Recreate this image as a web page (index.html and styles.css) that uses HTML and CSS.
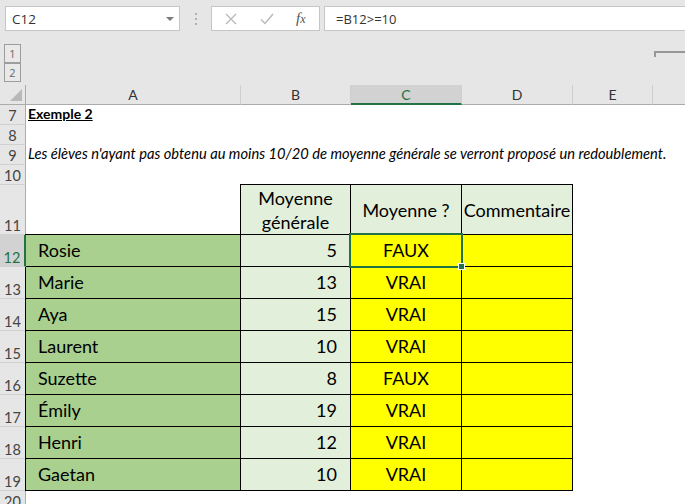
FILE: index.html
```html
<!DOCTYPE html>
<html lang="fr">
<head>
<meta charset="utf-8">
<title>Exemple 2</title>
<link rel="stylesheet" href="styles.css">
</head>
<body>
<div class="app">
  <div class="fbar">
    <div class="namebox"><span>C12</span><span class="caret"></span></div>
    <div class="grip"><i></i><i></i><i></i></div>
    <div class="fbtns">
      <svg class="ico" width="12" height="12" viewBox="0 0 12 12"><path d="M1 1L11 11M11 1L1 11" stroke="#b9b9b9" stroke-width="1.3" fill="none"/></svg>
      <svg class="ico" width="14" height="12" viewBox="0 0 14 12"><path d="M1 6.5L5 10.5L13 1" stroke="#b9b9b9" stroke-width="1.5" fill="none"/></svg>
      <span class="fx">f<span class="fxx">x</span></span>
    </div>
    <div class="finput">=B12&gt;=10</div>
  </div>
  <div class="outline">
    <div class="levels"><div class="lvl">1</div><div class="lvl">2</div></div>
    <div class="bracket"></div>
  </div>
  <div class="sheet">
    <div class="ch corner"><span class="tri"></span></div>
    <div class="ch">A</div>
    <div class="ch">B</div>
    <div class="ch ch-sel">C</div>
    <div class="ch">D</div>
    <div class="ch">E</div>
    <div class="ch ch-last"></div>

    <div class="rh">7</div>
    <div class="cell full"><span class="title">Exemple 2</span></div>
    <div class="rh">8</div>
    <div class="cell full"></div>
    <div class="rh">9</div>
    <div class="cell full"><span class="note">Les élèves n'ayant pas obtenu au moins 10/20 de moyenne générale se verront proposé un redoublement.</span></div>
    <div class="rh">10</div>
    <div class="cell full"></div>

    <div class="rh">11</div>
    <div class="cell"></div>
    <div class="t head">Moyenne<br>générale</div>
    <div class="t head">Moyenne ?</div>
    <div class="t head">Commentaire</div>
    <div class="cell rest"></div>

    <div class="rh rh-sel rh-t">12</div>
    <div class="t name">Rosie</div>
    <div class="t num">5</div>
    <div class="t res res-sel">FAUX<span class="sel"></span><span class="handle"></span></div>
    <div class="t com"></div>
    <div class="cell rest"></div>

    <div class="rh rh-t">13</div>
    <div class="t name">Marie</div>
    <div class="t num">13</div>
    <div class="t res">VRAI</div>
    <div class="t com"></div>
    <div class="cell rest"></div>

    <div class="rh rh-t">14</div>
    <div class="t name">Aya</div>
    <div class="t num">15</div>
    <div class="t res">VRAI</div>
    <div class="t com"></div>
    <div class="cell rest"></div>

    <div class="rh rh-t">15</div>
    <div class="t name">Laurent</div>
    <div class="t num">10</div>
    <div class="t res">VRAI</div>
    <div class="t com"></div>
    <div class="cell rest"></div>

    <div class="rh rh-t">16</div>
    <div class="t name">Suzette</div>
    <div class="t num">8</div>
    <div class="t res">FAUX</div>
    <div class="t com"></div>
    <div class="cell rest"></div>

    <div class="rh rh-t">17</div>
    <div class="t name">Émily</div>
    <div class="t num">19</div>
    <div class="t res">VRAI</div>
    <div class="t com"></div>
    <div class="cell rest"></div>

    <div class="rh rh-t">18</div>
    <div class="t name">Henri</div>
    <div class="t num">12</div>
    <div class="t res">VRAI</div>
    <div class="t com"></div>
    <div class="cell rest"></div>

    <div class="rh rh-t">19</div>
    <div class="t name">Gaetan</div>
    <div class="t num">10</div>
    <div class="t res">VRAI</div>
    <div class="t com"></div>
    <div class="cell rest"></div>

    <div class="rh">20</div>
    <div class="cell full"></div>
  </div>
</div>
</body>
</html>
```
FILE: styles.css
```css
* { box-sizing: border-box; }
html, body { margin: 0; padding: 0; }
body {
  width: 685px;
  height: 504px;
  overflow: hidden;
  background: #e6e6e6;
  font-family: "Open Sans", "Noto Sans", sans-serif;
  color: #333;
}
.app { display: flex; flex-direction: column; height: 504px; overflow: hidden; }

/* formula bar */
.fbar { display: flex; flex-shrink: 0; height: 31px; padding: 6px 0 0 5px; }
.namebox {
  width: 175px; height: 25px;
  background: #fff; border: 1px solid #c6c6c6;
  display: flex; align-items: center; justify-content: space-between;
  padding: 0 5px 0 6px;
  font-size: 13.5px; color: #333;
}
.caret {
  width: 0; height: 0;
  border-left: 4px solid transparent; border-right: 4px solid transparent;
  border-top: 4px solid #7a7a7a;
}
.grip { width: 31px; display: flex; flex-direction: column; align-items: center; padding-top: 7px; gap: 3px; }
.grip i { display: block; width: 2px; height: 2px; background: #b0b0b0; }
.fbtns {
  width: 109px; height: 25px; background: #fff; border: 1px solid #c6c6c6;
  display: flex; align-items: center; padding-left: 13px;
}
.fbtns .ico:first-child { margin-right: 23px; }
.fbtns .ico:nth-child(2) { margin-right: 22px; }
.fx { font-family: "Liberation Serif", serif; font-style: italic; font-size: 15px; color: #555; line-height: 1; }
.fxx { font-size: 12px; }
.finput {
  flex: 1; height: 25px; margin-left: 4px;
  background: #fff; border: 1px solid #c6c6c6; border-right: none;
  display: flex; align-items: center; padding-left: 11px;
  font-size: 13px; color: #333;
}

/* outline area */
.outline { height: 54px; flex-shrink: 0; display: flex; }
.levels { margin: 13px 0 0 4px; display: flex; flex-direction: column; }
.lvl {
  width: 17px; height: 19px; border: 1px solid #9d9d9d; background: #e9e9e9;
  display: flex; align-items: center; justify-content: center;
  font-size: 11px; color: #666;
}
.bracket {
  margin: 20px 0 0 auto; width: 31px; height: 6px;
  border-top: 2px solid #979797; border-left: 2px solid #979797;
}

/* sheet */
.sheet {
  flex: none;
  height: 419px;
  overflow: hidden;
  display: grid;
  grid-template-columns: 26px 215px 110px 111px 111px 80px 1fr;
  grid-template-rows: 20px repeat(4, 20px) 50px repeat(8, 32px) 20px;
  background: #fff;
  font-family: "Lato", "Liberation Sans", sans-serif;
}
.ch {
  background: #e6e6e6;
  border-right: 1px solid #cfcfcf;
  border-bottom: 1px solid #ababab;
  display: flex; align-items: center; justify-content: center;
  font-size: 14px; color: #333;
}
.corner { border-right: 1px solid #ababab; position: relative; }
.tri {
  position: absolute; right: 3px; bottom: 3px;
  width: 0; height: 0;
  border-left: 12px solid transparent; border-bottom: 12px solid #b8b8b8;
}
.ch-sel { background: #d2d2d2; border-bottom: 2px solid #217346; color: #217346; }
.ch-last { border-right: none; }

.rh {
  background: #e6e6e6;
  border-right: 1px solid #ababab;
  border-bottom: 1px solid #d0d0d0;
  display: flex; align-items: flex-end; justify-content: center;
  padding-bottom: 1px;
  font-size: 14.5px; color: #444; line-height: 1;
}
.rh-sel {
  position: relative; z-index: 1;
  background: #d2d2d2; color: #217346;
  border-right: 2px solid #217346;
}

.cell { background: #fff; }
.full { grid-column: span 6; display: flex; align-items: flex-end; padding: 0 0 2px 2px; }
.rest { grid-column: span 2; }
.title { font-weight: bold; text-decoration: underline; font-size: 14px; color: #000; line-height: 1.2; }
.note { font-style: italic; font-size: 14.7px; color: #000; white-space: nowrap; line-height: 1.2; }

.t {
  border: 1px solid #000;
  margin: -1px 0 0 -1px;
  display: flex; align-items: center;
  font-size: 18px; color: #000; line-height: 1.32;
  white-space: nowrap;
}
.head { background: #e2efda; justify-content: center; text-align: center; padding-top: 2px; }
.name { background: #a9d08e; padding-left: 12px; }
.num { background: #e2efda; justify-content: flex-end; padding-right: 13px; }
.res { background: #ffff00; justify-content: center; }
.com { background: #ffff00; }
.res-sel { position: relative; z-index: 2; }
.sel {
  position: absolute; left: -2px; right: -2px; top: -2px; bottom: -2px;
  border: 2px solid #217346;
}
.handle {
  position: absolute; right: -4px; bottom: -4px;
  width: 7px; height: 7px; background: #217346; border: 1px solid #fff;
}
```
